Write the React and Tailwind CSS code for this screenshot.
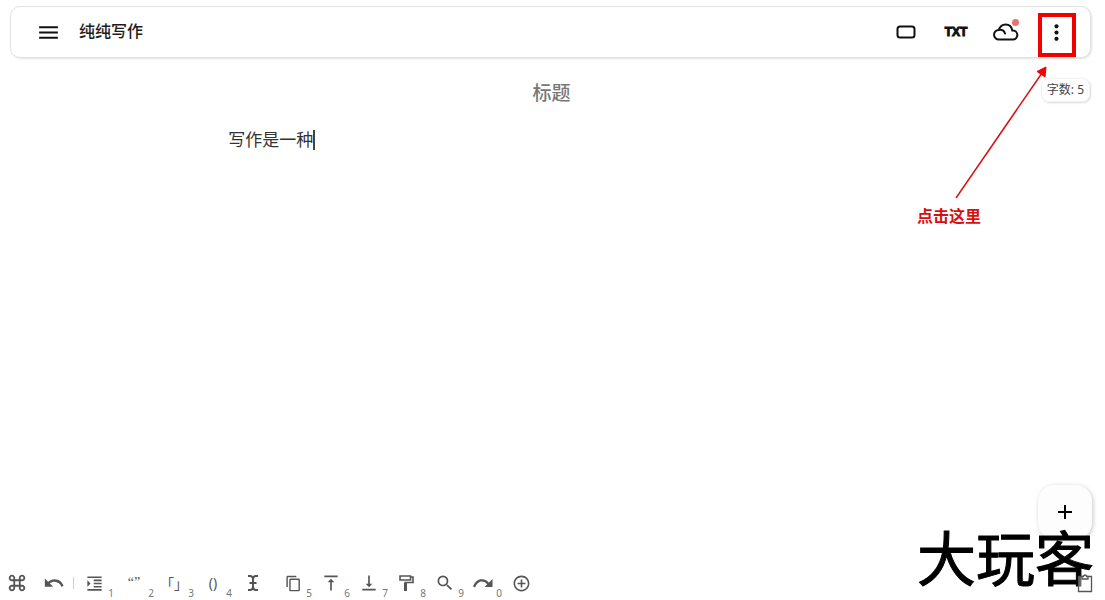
import React from "react";
import {
  MdMenu,
  MdMoreVert,
  MdUndo,
  MdKeyboardCommandKey,
  MdFormatIndentIncrease,
  MdVerticalAlignTop,
  MdVerticalAlignBottom,
  MdContentCopy,
  MdSearch,
  MdAdd,
  MdAddCircleOutline,
} from "react-icons/md";

function RectIcon() {
  return (
    <svg className="h-6 w-6" viewBox="0 0 24 24" fill="none" stroke="#111" strokeWidth="2">
      <rect x="3.5" y="6.5" width="17" height="11" rx="2.5" />
    </svg>
  );
}

function CloudIcon() {
  return (
    <svg className="h-7 w-7" viewBox="0 0 28 28" fill="none" stroke="#111" strokeWidth="2" strokeLinecap="round" strokeLinejoin="round">
      <path d="M7 21.500a4.800 4.800 0 0 1-.3-9.600C8 8.500 10.300 6.500 13.500 6.500c3.700 0 6.300 2.300 6.800 6a4.500 4.500 0 0 1 1 9Z" />
      <path d="M6.700 11.900c3.300-.8 5.600.6 6.300 3.600" />
    </svg>
  );
}

function IBeamIcon() {
  return (
    <svg className="h-5 w-5" viewBox="0 0 20 20" fill="none" stroke="currentColor" strokeWidth="2">
      <path d="M5 3h2.500Q10 3.500 10 6v8q0 2.500-2.500 3H5M15 3h-2.500Q10 3.500 10 6M10 14q0 2.500 2.500 3H15M6.500 10h7" />
    </svg>
  );
}

function RollerIcon() {
  return (
    <svg className="h-5 w-5" viewBox="0 0 20 20" fill="none" stroke="currentColor">
      <path d="M3 3h10.500v4H3ZM13.500 4h2.500v5.500H8.500V12" strokeWidth="1.600" />
      <path d="M8.500 9.500V18" strokeWidth="3" />
    </svg>
  );
}

function RedoIcon() {
  return (
    <svg className="h-5 w-5" viewBox="0 0 20 20" fill="none">
      <path d="M1 14C4 6.500 11 5 15.500 11" stroke="currentColor" strokeWidth="2.200" />
      <path d="M19.500 6v8h-8Z" fill="currentColor" />
    </svg>
  );
}

function ClipboardIcon() {
  return (
    <svg className="h-5 w-4" viewBox="0 0 16 20" fill="none" stroke="#555" strokeWidth="1.300">
      <path d="M1.500 3.500h13v15h-13Z" fill="#fff" fillOpacity="0.4" />
      <path d="M5 3.500v2.500h6V3.500H9.500a1.500 1.500 0 0 0-3 0Z" fill="#fff" />
    </svg>
  );
}

const tools = [
  { label: "缩进", icon: <MdFormatIndentIncrease size={19} />, key: "1", width: "w-10" },
  {
    label: "引号",
    icon: <span className="font-['Liberation_Serif',serif] text-sm leading-5">“”</span>,
    key: "2",
    width: "w-10",
  },
  {
    label: "直角引号",
    icon: <span className="font-['Noto_Sans_CJK_SC',sans-serif] text-sm leading-5 [font-feature-settings:'halt']">「」</span>,
    key: "3",
    width: "w-10",
  },
  { label: "括号", icon: <span className="text-sm leading-5">()</span>, key: "4", width: "w-[38px]" },
  { label: "选择", icon: <IBeamIcon />, width: "w-[42px]" },
  { label: "复制", icon: <MdContentCopy size={17} />, key: "5", width: "w-[38px]" },
  { label: "跳到顶部", icon: <MdVerticalAlignTop size={20} />, key: "6", width: "w-[38px]" },
  { label: "跳到底部", icon: <MdVerticalAlignBottom size={20} />, key: "7", width: "w-[38px]" },
  { label: "格式", icon: <RollerIcon />, key: "8", width: "w-[38px]" },
  { label: "搜索", icon: <MdSearch size={20} />, key: "9", width: "w-[38px]" },
  { label: "重做", icon: <RedoIcon />, key: "0", width: "w-[38px]" },
  { label: "添加", icon: <MdAddCircleOutline size={19} />, width: "w-[38px]" },
];

function Header() {
  return (
    <header className="ml-[10px] mr-[14px] mt-[6px] flex h-[52px] items-center rounded-[10px] border border-[#e2e2e2] pl-[25px] pr-[9px] shadow-[1px_1px_2px_rgba(0,0,0,0.12)]">
      <button aria-label="菜单" className="text-[#111]">
        <MdMenu size={25} />
      </button>
      <h1 className="ml-[18px] pb-[2px] text-base font-medium text-[#1c1c1c]">纯纯写作</h1>
      <div className="ml-auto flex items-center">
        <button aria-label="窗口" className="flex w-[50px] justify-center">
          <RectIcon />
        </button>
        <button className="w-[50px] text-center font-['Liberation_Sans',sans-serif] text-xs font-bold text-[#111] [-webkit-text-stroke:1px_#111]">
          TXT
        </button>
        <button aria-label="云同步" className="relative flex w-[50px] justify-center">
          <CloudIcon />
          <span className="absolute right-[12px] top-px h-[7px] w-[7px] rounded-full bg-[#e57373]" />
        </button>
        <button aria-label="更多" className="relative flex w-[50px] justify-center text-[#111]">
          <MdMoreVert size={25} />
          <span className="absolute -top-[7px] left-[7px] h-[44px] w-[38px] border-4 border-[#f20000]" />
        </button>
      </div>
    </header>
  );
}

function Hint() {
  return (
    <div className="pointer-events-none absolute right-[54px] top-[64px] flex w-[134px] flex-col text-[#d80f0f]">
      <svg className="h-[136px] w-[134px]" viewBox="0 0 134 136" fill="none">
        <path d="M39 134 125 9" stroke="currentColor" strokeWidth="1.500" />
        <path d="M129 3 120 7.500 128 13Z" fill="#f20000" stroke="#f20000" />
      </svg>
      <strong className="mt-1 text-base font-bold leading-6">点击这里</strong>
    </div>
  );
}

export default function App() {
  return (
    <div className="relative flex min-h-screen flex-col bg-white font-['Noto_Sans','Noto_Sans_CJK_SC',sans-serif] text-[#222]">
      <Header />
      <main className="flex flex-1 flex-col">
        <div className="mt-5 grid grid-cols-3 items-start pr-[15px]">
          <span />
          <input
            aria-label="标题"
            placeholder="标题"
            className="h-[30px] w-full bg-transparent pl-[13px] text-center text-[19px] font-medium leading-7 outline-none placeholder:text-[#777]"
          />
          <span className="justify-self-end rounded-lg border border-[#f2f2f2] px-[5px] text-xs leading-[22px] text-[#444] shadow-[1px_1px_2px_rgba(0,0,0,0.15)]">
            字数: 5
          </span>
        </div>
        <div className="mt-5 flex items-center pl-[20.650%]">
          <textarea
            aria-label="正文"
            rows={1}
            defaultValue="写作是一种"
            className="field-sizing-content resize-none overflow-hidden bg-transparent text-[17px] leading-6 text-[#333] outline-none"
          />
          <span className="h-5 w-[2px] bg-[#444]" />
        </div>
      </main>
      <Hint />
      <button
        aria-label="新建"
        className="absolute bottom-[61px] right-[13px] flex h-[54px] w-[54px] items-center justify-center rounded-2xl bg-[#fdfdfd] text-black shadow-[1px_1px_4px_rgba(0,0,0,0.22)]"
      >
        <MdAdd size={24} />
      </button>
      <div className="pointer-events-none absolute bottom-[14px] right-[11px] font-['Noto_Sans_CJK_SC',sans-serif] text-[59px] font-normal leading-[60px] text-black [-webkit-text-stroke:1px_#000]">
        大玩客
      </div>
      <footer className="relative flex h-[34px] items-center text-[#555]">
        <button aria-label="命令" className="flex w-[34px] justify-center">
          <MdKeyboardCommandKey size={22} />
        </button>
        <button aria-label="撤销" className="flex w-[39px] justify-center">
          <MdUndo size={22} />
        </button>
        <div className="flex h-3 items-center border-l border-[#ccc]">
          {tools.map((tool) => (
            <button
              key={tool.label}
              aria-label={tool.label}
              className={`relative flex h-3 items-center justify-center ${tool.width}`}
            >
              {tool.icon}
              {tool.key && (
                <sub className="absolute -bottom-[10px] right-0 text-[10px] leading-3 text-[#777]">{tool.key}</sub>
              )}
            </button>
          ))}
        </div>
        <button aria-label="剪贴板" className="ml-auto mr-[12px]">
          <ClipboardIcon />
        </button>
      </footer>
    </div>
  );
}
